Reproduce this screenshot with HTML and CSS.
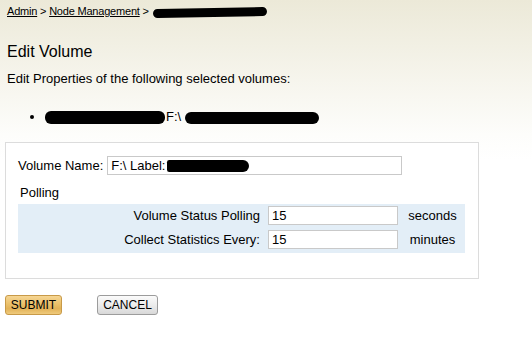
FILE: index.html
```html
<!DOCTYPE html>
<html lang="en">
<head>
  <meta charset="UTF-8" />
  <title>Edit Volume</title>
  <link rel="stylesheet" href="styles.css">
</head>
<body>
  <div class="crumbs">
    <a href="#">Admin</a> &gt; <a href="#">Node Management</a> &gt; <span class="redact redact-crumb"></span>
  </div>

  <h1>Edit Volume</h1>
  <p class="intro">Edit Properties of the following selected volumes:</p>

  <ul class="volumes">
    <li><span class="redact redact-a"></span>F:\ <span class="redact redact-b"></span></li>
  </ul>

  <div class="panel">
    <div class="name-row">
      <label for="volname">Volume Name:</label>
      <div class="name-field">
        <input id="volname" type="text" value="F:\ Label:">
        <span class="redact redact-input"></span>
      </div>
    </div>

    <div class="section-title">Polling</div>
    <div class="polling">
      <label for="statpoll">Volume Status Polling</label>
      <input id="statpoll" type="text" value="15">
      <span class="unit">seconds</span>

      <label for="statcollect">Collect Statistics Every:</label>
      <input id="statcollect" type="text" value="15">
      <span class="unit">minutes</span>
    </div>
  </div>

  <div class="actions">
    <button class="btn btn-submit">SUBMIT</button>
    <button class="btn btn-cancel">CANCEL</button>
  </div>
</body>
</html>
```

FILE: styles.css
```css
html, body {
  margin: 0;
  padding: 0;
  height: 100%;
}

body {
  background: linear-gradient(to bottom, #ece9d8 0, #fdfdfb 135px, #fff 160px);
  font-family: 'Liberation Sans', Arial, sans-serif;
  font-size: 13px;
  color: #000;
}

.crumbs {
  padding: 4px 7px 0;
  font-size: 11px;
  letter-spacing: -0.2px;
  line-height: 14px;
  height: 18px;
}

.crumbs a {
  color: #000;
  text-decoration: underline;
}

.redact {
  display: inline-block;
  background: #000;
  border-radius: 6px;
  vertical-align: middle;
}

.redact-crumb {
  width: 114px;
  height: 9px;
  margin-left: 1px;
  transform: rotate(-1deg);
}

h1 {
  margin: 20px 0 0;
  padding-left: 7px;
  font-size: 16px;
  font-weight: normal;
  line-height: 20px;
}

.intro {
  margin: 9px 0 0;
  padding-left: 7px;
  line-height: 16px;
}

.volumes {
  margin: 22px 0 0;
  padding-left: 45px;
  line-height: 16px;
}

.redact-a {
  width: 120px;
  height: 13px;
  margin-right: 1px;
}

.redact-b {
  width: 134px;
  height: 12px;
}

.panel {
  margin: 17px 0 0 5px;
  width: 447px;
  height: 120px;
  padding: 13px 13px 2px 12px;
  background: #fff;
  border: 1px solid #dcdcdc;
}

.name-row {
  display: flex;
  align-items: center;
  gap: 4px;
}

.name-field {
  position: relative;
}

.name-field input,
.polling input {
  box-sizing: border-box;
  height: 19px;
  padding: 0 3px;
  border: 1px solid #c9c9c9;
  font: 13px 'Liberation Sans', Arial, sans-serif;
  background: #fff;
}

.name-field input {
  width: 295px;
}

.redact-input {
  position: absolute;
  left: 60px;
  top: 4px;
  width: 82px;
  height: 12px;
  border-radius: 3px 8px 8px 3px;
}

.section-title {
  margin: 9px 0 0 2px;
  line-height: 17px;
}

.polling {
  display: grid;
  grid-template-columns: 244px 130px 1fr;
  column-gap: 6px;
  row-gap: 5px;
  align-items: center;
  margin-top: 3px;
  padding: 2px 0 4px;
  background: #e3eef7;
}

.polling label {
  text-align: right;
  padding-right: 2px;
}

.polling input {
  width: 130px;
}

.unit {
  text-align: center;
  padding-right: 4px;
}

.actions {
  display: flex;
  gap: 35px;
  margin: 16px 0 0 5px;
}

.btn {
  height: 20px;
  padding: 0;
  font: 12px 'Liberation Sans', Arial, sans-serif;
  color: #000;
  border-radius: 3px;
  cursor: pointer;
}

.btn-submit {
  width: 57px;
  border: 1px solid #c89a48;
  background: linear-gradient(to bottom, #f6d694 0, #eac06a 45%, #e2b258 70%, #efca7c 100%);
}

.btn-cancel {
  width: 61px;
  border: 1px solid #9c9c9c;
  background: linear-gradient(to bottom, #fbfbfb 0, #ececec 50%, #d8d8d8 100%);
}
```
